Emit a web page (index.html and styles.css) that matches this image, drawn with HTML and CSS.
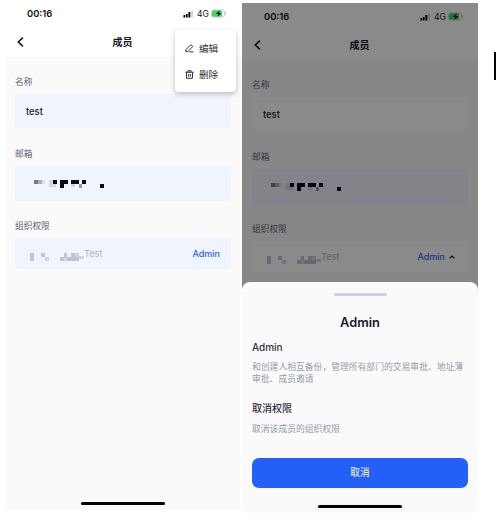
FILE: index.html
```html
<!DOCTYPE html>
<html lang="zh-CN">
<head>
<meta charset="utf-8">
<title>成员</title>
<link rel="stylesheet" href="styles.css">
</head>
<body>
<svg class="defs" width="0" height="0" aria-hidden="true">
  <symbol id="signal" viewBox="0 0 12 8">
    <path d="M.5 5h1.7v2.5H.5zM2.9 4h1.7v3.5H2.9zM5.4 2h1.9v5.5H5.4z"/>
    <path d="M8.4.6h1.2v6.9H8.4z" opacity=".25"/>
  </symbol>
  <symbol id="battery" viewBox="0 0 16 9">
    <rect x=".5" y=".8" width="13" height="7.3" rx="2.2" fill="none" stroke="#777" stroke-opacity=".5" stroke-width=".7"/>
    <rect x="1" y="1.2" width="10" height="6.5" rx="1.5" fill="#43d465"/>
    <path d="M14.4 3v2.6q.9-.4.9-1.3T14.4 3" opacity=".35"/>
    <path d="M8.7 1.6 4.8 4.8h2.5l-.8 2.6 4.1-3.5H8z"/>
  </symbol>
  <symbol id="back" viewBox="0 0 8 12"><path d="M6.9 1.6 2.3 6l4.6 4.4" fill="none" stroke="#17182b" stroke-width="1.6"/></symbol>
  <symbol id="mail" viewBox="0 0 76 8" shape-rendering="crispEdges">
    <path fill="#777986" d="M0 0h4v4H0z"/><path fill="#aaacb7" d="M4 0h4v4H4z"/><path fill="#dfe2ec" d="M8 0h3v4H8z"/>
    <path fill="#d3d7e2" d="M15 0h4v7h-4zM19 4h3v3h-3zM37 4h4v3h-4z"/>
    <path fill="#080b1c" d="M19 0h4v4h-4zM26 0h8v4h-4v4h-4zM37 0h8v4h-8zM48 0h4v4h-4zM66 4h4v4h-4z"/>
    <path fill="#9699a5" d="M45 4h3v4h-3z"/>
  </symbol>
  <symbol id="org" viewBox="0 0 54 8" shape-rendering="crispEdges">
    <path fill="#bfc3d2" d="M0 0h4v8H0zM11 0h4v4h-4zM30 4h4v4h-4zM34 0h3v4h-3zM37 4h4v4h-4zM41 0h4v8h-4zM45 4h4v4h-4z"/>
    <path fill="#d0d4e0" d="M15 4h4v4h-4zM34 4h3v4h-3zM45 0h4v4h-4zM49 3h5v3h-5z"/>
  </symbol>
</svg>
<main class="board">
  <section class="phone">
    <div class="top">
      <div class="status"><b>00:16</b><svg class="signal"><use href="#signal"/></svg><span>4G</span><svg class="battery"><use href="#battery"/></svg></div>
      <header class="nav"><svg class="back"><use href="#back"/></svg><h1>成员</h1></header>
    </div>
    <div class="form">
      <label>名称</label><div class="field name">test</div>
      <label>邮箱</label><div class="field mail"><svg class="mailtext"><use href="#mail"/></svg></div>
      <label>组织权限</label><div class="field org"><svg class="orgtext"><use href="#org"/></svg><span class="test">Test</span><span class="role">Admin</span></div>
    </div>
    <i class="home"></i>
    <div class="menu">
      <div class="item"><svg viewBox="0 0 10 10"><path d="M1.2 6.1 5.8 1.4q.8-.8 1.6 0l.5.5q.8.8 0 1.6L3.3 8.2l-2.4.4zM4.7 8.8h4.5"/></svg>编辑</div>
      <div class="item"><svg viewBox="0 0 10 10"><path d="M.4 2.5h9.2M3.2 2.3V.8h3.6v1.5M1.6 2.7l.2 6.5h6.4l.2-6.5M4 4.5v2.8M6 4.5v2.8"/></svg>删除</div>
    </div>
  </section>
  <section class="phone second">
    <div class="top">
      <div class="status"><b>00:16</b><svg class="signal"><use href="#signal"/></svg><span>4G</span><svg class="battery"><use href="#battery"/></svg></div>
      <header class="nav"><svg class="back"><use href="#back"/></svg><h1>成员</h1></header>
    </div>
    <div class="form">
      <label>名称</label><div class="field name white">test</div>
      <label>邮箱</label><div class="field mail"><svg class="mailtext"><use href="#mail"/></svg></div>
      <label>组织权限</label><div class="field org white"><svg class="orgtext"><use href="#org"/></svg><span class="test">Test</span><span class="role">Admin</span><svg class="up" viewBox="0 0 6 4"><path d="M.6 3.4 3 1l2.4 2.4"/></svg></div>
    </div>
    <div class="shade"></div>
    <div class="sheet">
      <i class="grip"></i>
      <h2>Admin</h2>
      <h3>Admin</h3>
      <p>和创建人相互备份，管理所有部门的交易审批、地址薄<br>审批、成员邀请</p>
      <h3 class="cancel">取消权限</h3>
      <p>取消该成员的组织权限</p>
      <button>取消</button>
      <i class="home"></i>
    </div>
  </section>
  <i class="edge"></i>
</main>
</body>
</html>
```
FILE: styles.css
```css
* { box-sizing: border-box; }
body { margin: 0; background: #fff; font-family: Inter, "Noto Sans CJK SC", sans-serif; color: #17182b; }
.defs { position: absolute; }
h1, h2, h3, p { margin: 0; }
svg { flex: none; display: block; }
.board { display: flex; gap: 1px; width: 496px; height: 530px; padding-left: 5px; overflow: hidden; }
.phone { position: relative; flex: none; display: flex; flex-direction: column; width: 236px; height: 510px; background: #fafafa; }
.second { margin-top: 3px; overflow: hidden; }
.top { height: 57px; background: #fff; }
.status { display: flex; align-items: center; height: 27px; padding: 0 14px 0 22px; color: #111; }
.status b { font-size: 9.4px; line-height: 12px; font-weight: 600; margin-right: auto; }
.status span { font-size: 8.6px; line-height: 12px; margin: 0 2px 0 2px; }
.signal { width: 12px; height: 8px; }
.battery { width: 16px; height: 9px; }
.nav { position: relative; display: flex; align-items: center; height: 29px; padding-left: 11px; }
.back { width: 8px; height: 12px; }
.nav h1 { flex: 1; margin-right: 20px; text-align: center; font-size: 10px; line-height: 16px; font-weight: 600; }
.form { display: flex; flex-direction: column; padding: 17px 10px 0; }
.form label { height: 16px; font-size: 8.7px; line-height: 16px; color: #62646d; }
.field { display: flex; align-items: center; background: #f0f4fd; border-radius: 4px; padding: 0 11px; margin-top: 4px; }
.name { height: 34px; margin-bottom: 18px; font-size: 9.4px; font-weight: 500; }
.mail { height: 35px; margin-bottom: 17px; padding-left: 19px; }
.mail svg { margin-top: 1px; }
.org { height: 31px; padding-left: 15px; font-size: 9.2px; }
.white { background: #fff; }
.mailtext { width: 76px; height: 8px; }
.orgtext { width: 54px; height: 8px; margin-top: 7px; }
.test { color: #afb2bf; }
.role { margin-left: auto; font-size: 9px; color: #2860ef; font-weight: 500; }
.up { width: 6px; height: 4px; margin: 0 2px 0 4px; fill: none; stroke: #17182b; stroke-width: 1.2; }
.home { width: 84px; height: 3px; margin: auto auto 5px; border-radius: 2px; background: #000; flex: none; }
.menu { position: absolute; left: 170px; top: 30px; width: 61px; height: 62px; padding: 5px 10px; background: #fff; border-radius: 4px; box-shadow: 0 2px 5px rgba(0, 0, 0, .25); }
.item { display: flex; align-items: center; gap: 5px; height: 26px; font-size: 9.6px; color: #30313d; }
.item svg { width: 9px; height: 9px; fill: none; stroke: #17182b; stroke-width: 1; }
.shade { position: absolute; inset: 0; background: rgba(0, 0, 0, .46); }
.sheet { position: absolute; left: 0; right: 0; bottom: 0; display: flex; flex-direction: column; height: 231px; padding: 0 10px; border-radius: 8px 8px 0 0; background: #fafafa; }
.grip { width: 53px; height: 3px; margin: 11px auto 0; border-radius: 2px; background: #ced1e5; flex: none; }
.sheet h2 { margin-top: 18px; text-align: center; font-size: 12.8px; line-height: 18px; font-weight: 600; }
.sheet h3 { margin-top: 8px; font-size: 10px; line-height: 14px; font-weight: 500; color: #30313d; }
.sheet p { margin-top: 7px; font-size: 8.8px; line-height: 12px; color: #989ba9; white-space: nowrap; }
.sheet .cancel { margin-top: 16px; }
.sheet .cancel + p { margin-top: 8px; }
.sheet button { height: 30px; margin-top: 23px; padding: 0; border: 0; border-radius: 7px; background: #2460f8; color: #fff; font: 400 9.7px/30px Inter, "Noto Sans CJK SC", sans-serif; flex: none; }
.edge { width: 2px; height: 28px; margin: 52px 0 0 auto; background: #000; }
```
